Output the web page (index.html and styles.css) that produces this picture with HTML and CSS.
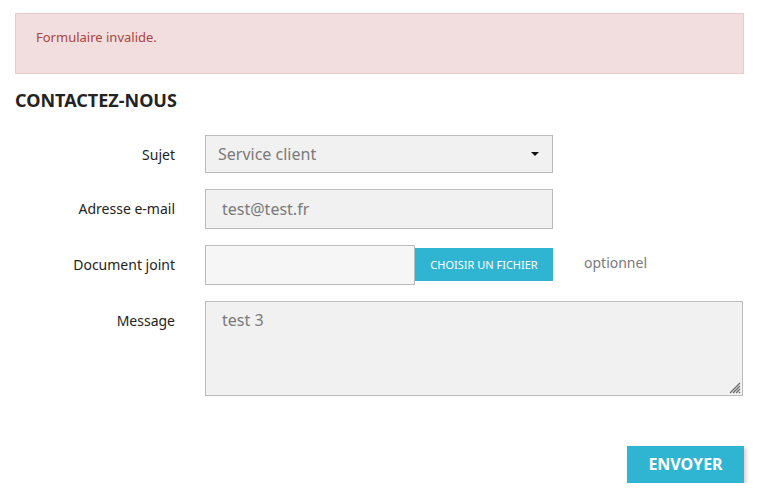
FILE: index.html
```html
<!DOCTYPE html>
<html lang="fr">
<head>
  <meta charset="UTF-8" />
  <meta name="viewport" content="width=device-width, initial-scale=1.0"/>
  <title>Contactez-nous</title>
  <link rel="stylesheet" href="styles.css">
</head>
<body>

  <div class="container">
    <div class="alert">
      <ul>
        <li>Formulaire invalide.</li>
      </ul>
    </div>

    <form class="contact-form" onsubmit="return false">
      <h3 class="title">Contactez-nous</h3>

      <div class="form-row">
        <label class="form-label" for="subject">Sujet</label>
        <div class="field">
          <div class="select-wrap">
            <select id="subject" class="form-control">
              <option>Service client</option>
              <option>Webmaster</option>
            </select>
            <svg class="caret" width="8" height="4" viewBox="0 0 8 4"><path d="M0 0h8L4 4z" fill="#111"/></svg>
          </div>
        </div>
      </div>

      <div class="form-row">
        <label class="form-label" for="email">Adresse e-mail</label>
        <div class="field">
          <input id="email" class="form-control input-tall" type="email" value="test@test.fr" />
        </div>
      </div>

      <div class="form-row">
        <label class="form-label">Document joint</label>
        <div class="field file-field">
          <span class="file-name"></span>
          <label class="file-btn">
            Choisir un fichier
            <input type="file" />
          </label>
        </div>
        <span class="help">optionnel</span>
      </div>

      <div class="form-row">
        <label class="form-label" for="message">Message</label>
        <div class="field wide textarea-wrap">
          <textarea id="message" class="form-control">test 3</textarea>
          <!-- resize grip -->
          <svg class="grip" width="12" height="12" viewBox="0 0 12 12">
            <path d="M11 1L1 11M11 4L4 11M11 7L7 11M11 10L10 11" stroke="#666" stroke-width="1.2"/>
          </svg>
        </div>
      </div>

      <div class="form-footer">
        <button class="btn-primary" type="submit">Envoyer</button>
      </div>
    </form>
  </div>

</body>
</html>
```

FILE: styles.css
```css
body {
  margin: 0;
  padding: 0;
  font-family: "Noto Sans", sans-serif;
  color: #232323;
  background: #fff;
}
.container {
  padding: 13px 24px 0 15px;
}
.alert {
  background: #f2dede;
  border: 1px solid #ebcccc;
  color: #a94442;
  padding: 13px 20px 26px;
  font-size: 13px;
  line-height: 20px;
}
.alert ul {
  list-style: none;
  margin: 0;
  padding: 0;
}
.title {
  margin: 17px 0 24px;
  font-size: 18px;
  line-height: 1.1;
  font-weight: 700;
  text-transform: uppercase;
  color: #232323;
}
.form-row {
  display: flex;
  align-items: flex-start;
  margin-bottom: 16px;
}
.form-label {
  width: 160px;
  flex: none;
  text-align: right;
  font-size: 14px;
  line-height: 20px;
  padding-top: 10px;
}
.field {
  width: 348px;
  margin-left: 30px;
  flex: none;
}
.field.wide {
  width: 538px;
}
.form-control {
  display: block;
  width: 100%;
  box-sizing: border-box;
  height: 40px;
  background: #f1f1f1;
  border: 1px solid #bbb;
  color: #7a7a7a;
  font-family: "Noto Sans", sans-serif;
  font-size: 16px;
  padding: 0 16px;
  outline: none;
}
.select-wrap {
  position: relative;
}
.select-wrap select {
  -webkit-appearance: none;
  appearance: none;
  height: 38px;
  padding-left: 12px;
  border-radius: 0;
}
.select-wrap .caret {
  position: absolute;
  right: 14px;
  top: 17px;
}
.file-field {
  display: flex;
  align-items: center;
}
.file-name {
  width: 210px;
  height: 40px;
  box-sizing: border-box;
  background: #f6f6f6;
  border: 1px solid #bbb;
}
.file-btn {
  flex: 1;
  height: 33px;
  background: #2fb5d2;
  color: #fff;
  font-size: 11px;
  text-transform: uppercase;
  display: flex;
  align-items: center;
  justify-content: center;
  cursor: pointer;
}
.file-btn input {
  display: none;
}
.help {
  margin-left: 31px;
  font-size: 14px;
  line-height: 20px;
  padding-top: 8px;
  color: #7a7a7a;
}
.textarea-wrap {
  position: relative;
}
textarea.form-control {
  height: 95px;
  padding: 6px 16px;
  line-height: 24px;
  resize: none;
}
.grip {
  position: absolute;
  right: 2px;
  bottom: 2px;
  pointer-events: none;
}
.form-footer {
  display: flex;
  justify-content: flex-end;
  margin-top: 50px;
}
.btn-primary {
  width: 117px;
  height: 37px;
  border: none;
  background: #2fb5d2;
  color: #fff;
  font-family: "Noto Sans", sans-serif;
  font-size: 16px;
  font-weight: 700;
  text-transform: uppercase;
  box-shadow: 2px 2px 4px rgba(0,0,0,0.2);
  cursor: pointer;
}
```
